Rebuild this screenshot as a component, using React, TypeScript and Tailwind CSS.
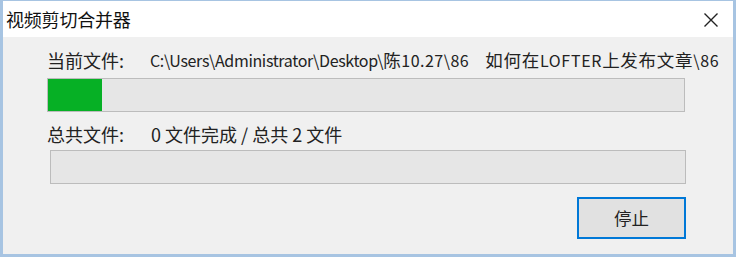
import React from "react";

export default function App() {
  const cjk = { fontFamily: '"Noto Sans CJK SC", "Noto Sans", sans-serif' };
  const C = ({ children }: { children: React.ReactNode }) => (
    <span className="text-[17.5px]">{children}</span>
  );
  return (
    <div
      className="w-[736px] h-[257px] bg-[#f0f0f0] flex flex-col border-l-[3px] border-r-[3px] border-b-[3px] border-t border-[#a7c4e2] overflow-hidden"
      style={cjk}
    >
      <div className="h-[36px] bg-white flex items-center justify-between pl-[3px] pr-[14px] shrink-0">
        <span className="text-[18px] text-[#111] leading-none tracking-[-0.2px]">视频剪切合并器</span>
        <svg width="16" height="16" viewBox="0 0 16 16" className="mt-[1px]">
          <path d="M1.5 1.5 L14.5 14.5 M14.5 1.5 L1.5 14.5" stroke="#222" strokeWidth="1.4" />
        </svg>
      </div>
      <div className="flex flex-col pl-[44px] pr-[47px] pt-[11px]">
        <div className="flex items-center h-[24px] text-[16px] text-[#222] leading-none">
          <span className="w-[103px] shrink-0 text-[18px]">当前文件:</span>
          <span className="whitespace-nowrap shrink-0 tracking-[-0.35px]">C:\Users\Administrator\Desktop\</span>
          <span className="whitespace-nowrap shrink-0 tracking-[0.5px]">
            <C>陈</C>10.27\86
          </span>
          <span className="whitespace-nowrap shrink-0 ml-[16px] tracking-[0.7px]">
            <C>如何在</C>LOFTER<C>上发布文章</C>\86
          </span>
        </div>
        <div className="mt-[6px] h-[34px] w-[638px] border border-[#bcbcbc] bg-[#e6e6e6] flex">
          <div className="w-[54px] h-full bg-[#06b025]" />
        </div>
        <div className="flex items-center h-[24px] mt-[10px] text-[18px] text-[#222] leading-none">
          <span className="w-[104px] shrink-0">总共文件:</span>
          <span className="whitespace-nowrap">0 文件完成 / 总共 2 文件</span>
        </div>
        <div className="mt-[4px] ml-[3px] h-[34px] w-[636px] border border-[#bcbcbc] bg-[#e6e6e6]" />
        <div className="flex justify-end mt-[13px]">
          <button className="w-[109px] h-[42px] border-2 border-[#0078d7] bg-[#e1e1e1] text-[17.5px] text-[#222] flex items-center justify-center leading-none">
            停止
          </button>
        </div>
      </div>
    </div>
  );
}
